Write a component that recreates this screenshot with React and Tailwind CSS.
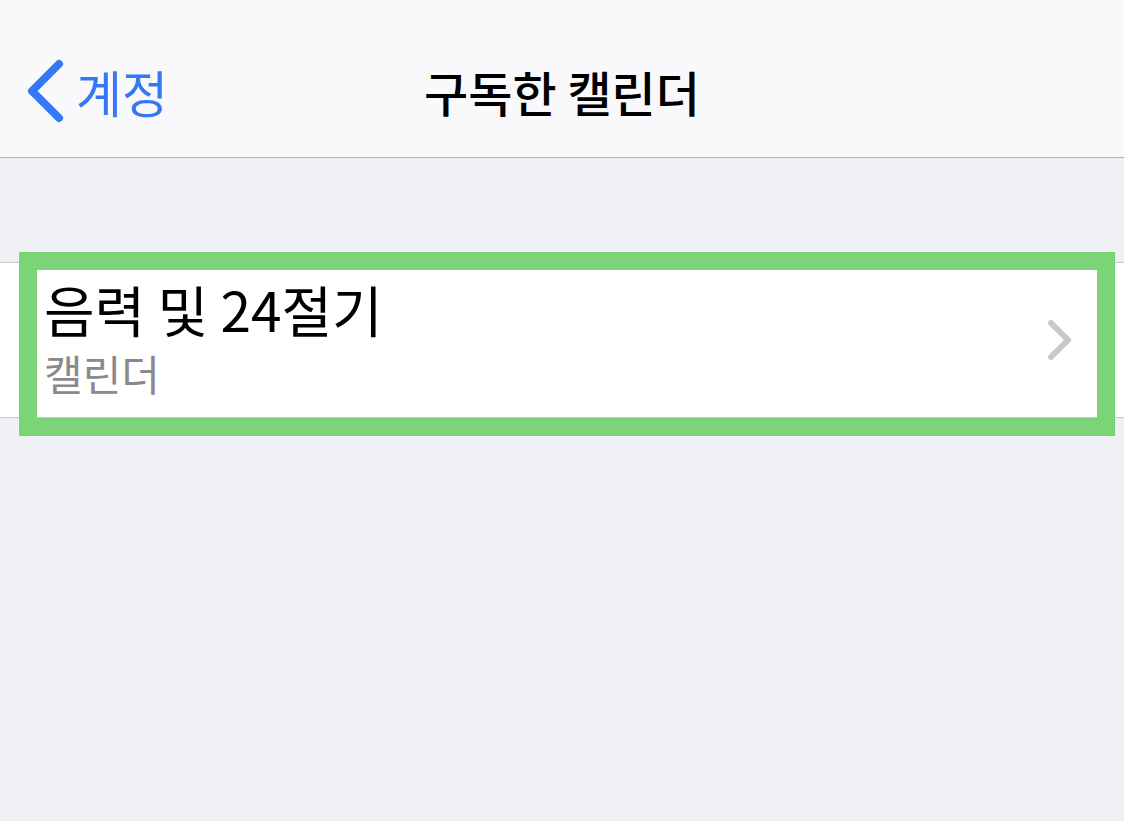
import React from 'react';

const font = { fontFamily: '"Noto Sans CJK KR", "Noto Sans", sans-serif' };

const App = () => {
    return (
        <div className="w-[1124px] h-[821px] bg-[#efeff4] overflow-hidden" style={font}>
            <div className="relative h-[158px] bg-[#f9f9fb] border-b border-[#b2b2b6] flex items-center justify-center pt-[24px]">
                <div className="absolute left-[24px] top-0 pt-[24px] h-full flex items-center">
                    <svg width="44" height="66" viewBox="0 0 44 66" className="mr-[8px]">
                        <path d="M35 6 L8 33 L35 60" fill="none" stroke="#3478f6" strokeWidth="8" strokeLinecap="round" strokeLinejoin="round" />
                    </svg>
                    <span className="text-[50px] leading-[60px] text-[#3478f6]">계정</span>
                </div>
                <h1 className="text-[48px] leading-[60px] font-medium text-black">구독한 캘린더</h1>
            </div>

            <div className="h-[104px]" />

            <div className="relative bg-white border-y border-[#c8c7cc] h-[156px] flex items-center pl-[44px] pr-[50px]">
                <div className="flex-1 flex flex-col mb-[7px]">
                    <span className="text-[55px] leading-[64px] text-black">음력 및 24절기</span>
                    <span className="mt-[8px] text-[42px] leading-[50px] text-[#8a8a8e]">캘린더</span>
                </div>
                <svg width="28" height="44" viewBox="0 0 28 44">
                    <path d="M5 5 L22 22 L5 39" fill="none" stroke="#c7c7cc" strokeWidth="6" strokeLinecap="round" strokeLinejoin="round" />
                </svg>
                <div className="absolute left-[19px] right-[9px] -top-[11px] -bottom-[19px] border-[18px] border-[#7bd578]" />
            </div>
        </div>
    );
};

export default App;
